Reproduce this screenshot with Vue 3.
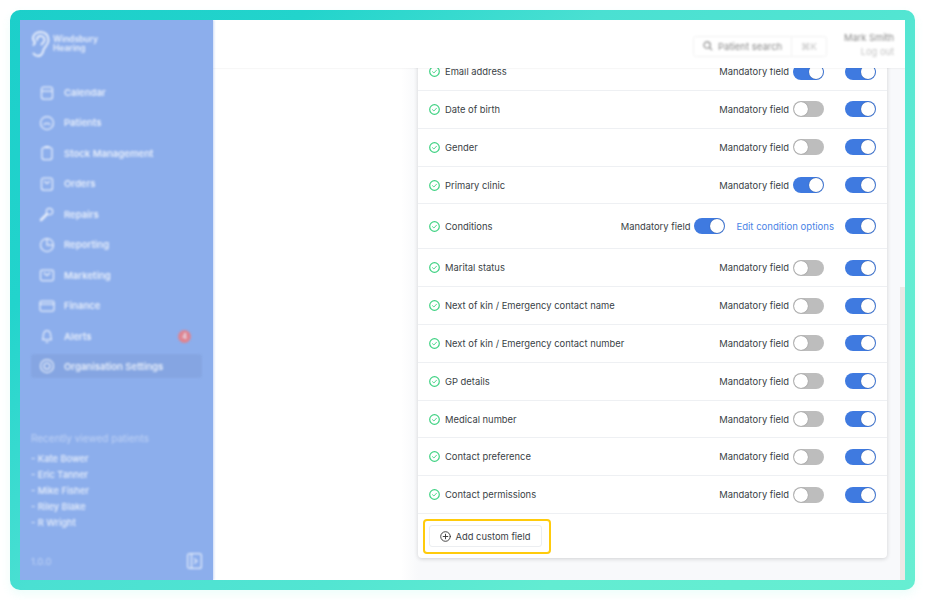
<script setup>
const nav = [
  { label: 'Calendar', icon: 'calendar' },
  { label: 'Patients', icon: 'patients' },
  { label: 'Stock Management', icon: 'stock' },
  { label: 'Orders', icon: 'orders' },
  { label: 'Repairs', icon: 'repairs' },
  { label: 'Reporting', icon: 'reporting' },
  { label: 'Marketing', icon: 'marketing' },
  { label: 'Finance', icon: 'finance' },
  { label: 'Alerts', icon: 'alerts', badge: '4' },
  { label: 'Organisation Settings', icon: 'settings', active: true }
]
const recent = ['Kate Bower', 'Eric Tanner', 'Mike Fisher', 'Riley Blake', 'R Wright']
const rows = [
  { name: 'Email address', mandatory: true },
  { name: 'Date of birth', mandatory: false },
  { name: 'Gender', mandatory: false },
  { name: 'Primary clinic', mandatory: true },
  { name: 'Conditions', mandatory: true, edit: true },
  { name: 'Marital status', mandatory: false },
  { name: 'Next of kin / Emergency contact name', mandatory: false },
  { name: 'Next of kin / Emergency contact number', mandatory: false },
  { name: 'GP details', mandatory: false },
  { name: 'Medical number', mandatory: false },
  { name: 'Contact preference', mandatory: false },
  { name: 'Contact permissions', mandatory: false }
]
</script>

<template>
  <div class="page">
    <div class="frame">
      <div class="window">
        <aside class="sidebar">
          <div class="side-inner">
            <div class="logo">
              <svg width="21" height="28" viewBox="0 0 21 28" fill="none" stroke="#fff" stroke-width="2" stroke-linecap="round">
                <path d="M3 9C3 4.5 6.5 2 10.5 2C15.5 2 18.5 5.5 18.5 10C18.5 15 14.5 16.5 13.5 20C12.8 23.5 11 26 8 26C6 26 4.5 25 3.5 23.5" />
                <path d="M7 10C7 7.5 8.5 6 10.5 6C13 6 14.5 8 14.5 10C14.5 12 12.5 13 11.5 14.5" />
                <path d="M3 9L5 13L3.5 15" />
              </svg>
              <div class="logo-text">Windsbury<br />Hearing</div>
            </div>
            <nav class="nav">
              <div v-for="item in nav" :key="item.label" class="nav-item" :class="{ active: item.active }">
                <svg class="nav-icon" width="16" height="16" viewBox="0 0 16 16" fill="none" stroke="#fff" stroke-width="1.25" stroke-linejoin="round" stroke-linecap="round">
                  <template v-if="item.icon === 'calendar'"><rect x="2.5" y="2" width="11" height="12" rx="2" /><path d="M2.5 6H13.5" /></template>
                  <template v-else-if="item.icon === 'patients'"><circle cx="8" cy="8" r="6.5" /><path d="M5 9.5C6 8 10 8 11 9.5" /></template>
                  <template v-else-if="item.icon === 'stock'"><rect x="3" y="2.5" width="10" height="12" rx="2" /><path d="M6 1.5H10" /></template>
                  <template v-else-if="item.icon === 'orders'"><rect x="2.5" y="2" width="11" height="12" rx="2" /><path d="M5.5 5.5L8 7.5L10.5 5.5" /></template>
                  <template v-else-if="item.icon === 'repairs'"><path d="M2 14L8 8" stroke-width="2.5" /><circle cx="10.5" cy="5.5" r="3.2" /></template>
                  <template v-else-if="item.icon === 'reporting'"><circle cx="8" cy="8" r="6.5" /><path d="M8 1.5V8H14" /></template>
                  <template v-else-if="item.icon === 'marketing'"><rect x="1.5" y="3" width="13" height="10.5" rx="1.5" /><path d="M5 6L8 8.5L11 6" /></template>
                  <template v-else-if="item.icon === 'finance'"><rect x="1" y="3" width="14" height="10" rx="1.5" /><path d="M1 6H15" /></template>
                  <template v-else-if="item.icon === 'alerts'"><path d="M3.5 11.5C4.5 10 4 8.5 4.5 6C5 3.5 6.5 2.5 8 2.5C9.5 2.5 11 3.5 11.5 6C12 8.5 11.5 10 12.5 11.5Z" /><path d="M7 14H9" /></template>
                  <template v-else><circle cx="8" cy="8" r="6.5" /><circle cx="8" cy="8" r="3" /></template>
                </svg>
                <span class="nav-label">{{ item.label }}</span>
                <span v-if="item.badge" class="badge">{{ item.badge }}</span>
              </div>
            </nav>
            <div class="recent">
              <div class="recent-title">Recently viewed patients</div>
              <div v-for="p in recent" :key="p" class="recent-item">- {{ p }}</div>
            </div>
            <div class="side-foot">
              <span>1.0.0</span>
              <svg width="15" height="16" viewBox="0 0 15 16" fill="none" stroke="#fff" stroke-width="1.2">
                <rect x="0.6" y="0.6" width="13.8" height="14.8" rx="2" />
                <path d="M4.5 1V15M7 5.5L10 8L7 10.5" />
              </svg>
            </div>
          </div>
        </aside>
        <main class="main">
          <header class="topbar">
            <div class="top-inner">
              <div class="search">
                <svg width="10" height="10" viewBox="0 0 11 11" fill="none" stroke="#888" stroke-width="1.3"><circle cx="4.5" cy="4.5" r="3.5" /><path d="M7 7L10 10" /></svg>
                <span class="search-text">Patient search</span>
                <span class="kbd">⌘K</span>
              </div>
              <div class="user">
                <div class="user-name">Mark Smith</div>
                <div class="user-out">Log out</div>
              </div>
            </div>
          </header>
          <div class="scroller">
            <div class="card">
              <div v-for="row in rows" :key="row.name" class="row" :class="{ tall: row.edit }">
                <svg class="check" width="11" height="11" viewBox="0 0 11 11" fill="none" stroke="#3fd283" stroke-width="1.2" stroke-linecap="round" stroke-linejoin="round">
                  <circle cx="5.5" cy="5.5" r="4.8" />
                  <path d="M3.5 5.7L4.9 7L7.5 4.2" stroke-width="0.9" />
                </svg>
                <span class="row-name">{{ row.name }}</span>
                <span class="mand">Mandatory field</span>
                <span class="toggle" :class="{ on: row.mandatory }"><i></i></span>
                <a v-if="row.edit" class="edit">Edit condition options</a>
                <span class="toggle on last"><i></i></span>
              </div>
              <div class="card-foot">
                <div class="highlight">
                  <button class="add">
                    <svg width="11" height="11" viewBox="0 0 11 11" fill="none" stroke="#333" stroke-width="0.9" stroke-linecap="round">
                      <circle cx="5.5" cy="5.5" r="4.8" />
                      <path d="M5.5 3.2V7.8M3.2 5.5H7.8" />
                    </svg>
                    Add custom field
                  </button>
                </div>
              </div>
            </div>
            <div class="scrollbar"></div>
          </div>
        </main>
      </div>
    </div>
  </div>
</template>

<style>
html, body { margin: 0; background: #fff; }
</style>

<style scoped>
.page {
  width: 925px;
  height: 600px;
  padding: 10px;
  box-sizing: border-box;
  font-family: Inter, "Liberation Sans", sans-serif;
  overflow: hidden;
}
.frame {
  height: 100%;
  box-sizing: border-box;
  padding: 10px;
  border-radius: 10px;
  background: linear-gradient(135deg, #1ccfca 0%, #22d4cc 20%, #4ae0d2 40%, #52e5d2 60%, #62ecd2 75%, #66eed2 100%);
  box-shadow: 0 4px 10px rgba(98, 236, 210, 0.12);
}
.window {
  display: flex;
  height: 100%;
  background: #fff;
  overflow: hidden;
}
.sidebar {
  width: 193px;
  flex: none;
  background: #8caeec;
  overflow: hidden;
  position: relative;
  z-index: 3;
  box-shadow: 1px 0 2px rgba(140, 174, 236, 0.45);
}
.side-inner {
  display: flex;
  flex-direction: column;
  height: 100%;
  box-sizing: border-box;
  padding: 10px 11px;
  color: #fff;
  filter: blur(1.2px);
  opacity: 0.8;
}
.logo {
  display: flex;
  align-items: center;
  gap: 2px;
  margin-left: -1px;
  height: 28px;
}
.logo-text {
  font-size: 8.5px;
  font-weight: 600;
  line-height: 9.5px;
}
.nav {
  display: flex;
  flex-direction: column;
  margin-top: 22.5px;
  gap: 6.44px;
}
.nav-item {
  display: flex;
  align-items: center;
  height: 24px;
  border-radius: 3px;
  padding: 0 8px;
  font-size: 9.55px;
  font-weight: 600;
  flex: none;
}
.nav-item.active { background: #84a4e0; }
.nav-icon { flex: none; margin-right: 9px; }
.nav-label { flex: 1; white-space: nowrap; }
.badge {
  width: 13px;
  height: 13px;
  border-radius: 50%;
  background: #f47a7a;
  font-size: 7px;
  line-height: 13px;
  text-align: center;
  margin-right: 3px;
}
.recent { margin-top: 53.5px; font-size: 9.3px; }
.recent-title { opacity: 0.55; height: 18px; margin-bottom: 1px; font-size: 10px; }
.recent-item { height: 16px; line-height: 16px; font-weight: 500; font-size: 9.3px; }
.side-foot {
  margin-top: auto;
  display: flex;
  justify-content: space-between;
  align-items: center;
  font-size: 9.5px;
  margin-bottom: 1px;
}
.side-foot span { opacity: 0.55; }
.main {
  flex: 1;
  min-width: 0;
  display: flex;
  flex-direction: column;
  background: #fff;
}
.topbar {
  height: 48px;
  flex: none;
  position: relative;
  z-index: 2;
  background: #fff;
  box-shadow: 0 1px 1px rgba(0, 0, 0, 0.03);
}
.top-inner {
  display: flex;
  height: 100%;
  justify-content: flex-end;
  align-items: center;
  padding-right: 11px;
  box-sizing: border-box;
  filter: blur(1px);
  color: #888;
}
.search {
  display: flex;
  align-items: center;
  width: 134px;
  height: 21px;
  margin-top: 4px;
  box-sizing: border-box;
  border: 1px solid #f1f1f1;
  border-radius: 3px;
  padding-left: 9px;
  font-size: 9.5px;
}
.search-text { margin-left: 5px; flex: 1; white-space: nowrap; }
.kbd {
  width: 34px;
  height: 100%;
  border-left: 1px solid #f1f1f1;
  text-align: center;
  line-height: 19px;
  color: #c4c4c4;
  flex: none;
}
.user {
  margin-left: 16px;
  width: 51px;
  text-align: right;
  font-size: 9.3px;
  line-height: 14px;
  white-space: nowrap;
  margin-top: 1px;
}
.user-out { color: #c4c4c4; }
.scroller {
  flex: 1;
  min-height: 0;
  position: relative;
  overflow: hidden;
  display: flex;
  flex-direction: column;
  justify-content: flex-end;
  padding: 0 18px 22px 205px;
  background: linear-gradient(90deg, #fff 0 188px, #f8f9fb 205px 100%);
}
.card {
  background: #fff;
  border-radius: 0 0 4px 4px;
  box-shadow: 0 1px 4px rgba(0, 0, 0, 0.16);
  flex: none;
}
.row {
  display: flex;
  align-items: center;
  height: 37.8px;
  box-sizing: border-box;
  border-bottom: 1px solid #eef0f3;
  padding: 0 11px;
  font-size: 9.4px;
  color: #3a3f46;
}
.row.tall { height: 45px; }
.check { flex: none; margin-right: 5px; }
.row-name { flex: 1; white-space: nowrap; }
.mand { margin-right: 4px; white-space: nowrap; }
.toggle {
  width: 31px;
  height: 16px;
  flex: none;
  border-radius: 8px;
  background: #bdbdbd;
  position: relative;
  margin-right: 21px;
}
.toggle i {
  position: absolute;
  left: 1px;
  top: 1px;
  width: 14px;
  height: 14px;
  border-radius: 50%;
  background: #fff;
  box-shadow: 0 0 1px rgba(0, 0, 0, 0.5);
}
.toggle.on { background: #3f7ae0; }
.toggle.on i { left: 16px; }
.toggle.last { margin-right: 0; }
.edit {
  color: #4a84e6;
  font-size: 9.55px;
  white-space: nowrap;
  margin-right: 11px;
  margin-left: -10px;
}
.card-foot { height: 44px; display: flex; align-items: center; padding-left: 5px; }
.highlight {
  box-sizing: border-box;
  width: 128px;
  height: 35px;
  border: 2px solid #ffcb0c;
  border-radius: 4px;
  display: flex;
  align-items: center;
  padding-left: 4px;
}
.add {
  display: flex;
  align-items: center;
  gap: 4.5px;
  width: 113px;
  height: 22px;
  padding: 0 0 0 10px;
  box-sizing: border-box;
  background: #fff;
  border: 1px solid #eceef1;
  border-radius: 3px;
  color: #3a3f46;
  font: inherit;
  font-size: 9.4px;
  white-space: nowrap;
}
.scrollbar {
  position: absolute;
  right: 0;
  top: 219px;
  bottom: 0;
  width: 5px;
  background: #ece8e6;
}
</style>
